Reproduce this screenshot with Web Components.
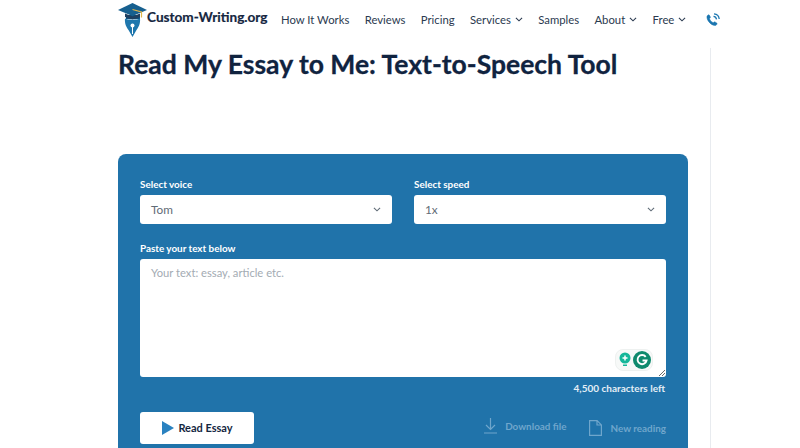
<!DOCTYPE html>
<html>
<head>
<meta charset="utf-8">
<style>
html, body { margin: 0; height: 448px; overflow: hidden; background: #fff; }
body { font-family: Lato, "Open Sans", sans-serif; }
</style>
</head>
<body>
<tts-page>
  <site-header slot="header">
    <nav-item>How It Works</nav-item>
    <nav-item>Reviews</nav-item>
    <nav-item>Pricing</nav-item>
    <nav-item caret>Services</nav-item>
    <nav-item>Samples</nav-item>
    <nav-item caret>About</nav-item>
    <nav-item caret>Free</nav-item>
  </site-header>
  <span slot="title">Read My Essay to Me: Text-to-Speech Tool</span>
  <tts-card>
    <select-field label="Select voice" value="Tom"></select-field>
    <select-field label="Select speed" value="1x"></select-field>
    <text-field label="Paste your text below" placeholder="Your text: essay, article etc." left="4,500 characters left"></text-field>
    <action-bar></action-bar>
  </tts-card>
</tts-page>

<script>
const CARET = `<svg width="8" height="5" viewBox="0 0 9 6" fill="none" stroke="currentColor" stroke-width="1.300"><path d="M.8 1l3.700 3.600L8.200 1"/></svg>`;

class TtsPage extends HTMLElement {
  constructor() {
    super();
    this.attachShadow({ mode: "open" });
    this.shadowRoot.innerHTML = `
    <style>
    :host { display: block; height: 448px; overflow: hidden; }
    .body { display: flex; height: 400px; }
    .main { width: 570px; margin-left: 118px; }
    h1 {
      margin: 0;
      padding-top: 1px;
      height: 105px;
      font: 700 26.5px/30px Lato, sans-serif;
      -webkit-text-stroke: .3px #10233f;
      color: #10233f;
    }
    .rail { margin-left: 22px; width: 1px; background: #e8ebef; }
    </style>
    <slot name="header"></slot>
    <div class="body">
      <div class="main">
        <h1><slot name="title"></slot></h1>
        <slot></slot>
      </div>
      <div class="rail"></div>
    </div>`;
  }
}

class SiteHeader extends HTMLElement {
  constructor() {
    super();
    this.attachShadow({ mode: "open" });
    this.shadowRoot.innerHTML = `
    <style>
    :host { display: flex; align-items: flex-start; height: 48px; padding-left: 118px; box-sizing: border-box; }
    .logo { display: flex; align-items: flex-start; width: 163px; }
    .logo svg { display: block; margin-top: 3px; }
    .name { font: 700 13.6px/18px Lato, sans-serif; -webkit-text-stroke: .2px #15263f; color: #15263f; margin: 8px 0 0 0; white-space: nowrap; }
    nav { display: flex; gap: 15.4px; margin-top: 11px; }
    .phone { margin: 13px 0 0 20px; display: block; }
    </style>
    <div class="logo">
      <svg width="29" height="34" viewBox="0 0 29 34">
        <path d="M8 12h14v4H8z" fill="#0f4f7d"/>
        <path d="M14.500 0L29 7 14.500 13 0 7z" fill="#17608f"/>
        <path d="M7 10.500l7.500 3 7.500-3V14l-7.500 2.500L7 14z" fill="#1f3f5f"/>
        <path d="M14.500 6.500l9 2.500v5.500" fill="none" stroke="#e2b64a" stroke-width="1.200"/>
        <path d="M7 15.500c2.500 1.600 12.500 1.600 15 0 .6 5-1.500 9-3.500 11.500l-4 7-4-7C8.500 24.500 6.400 20.500 7 15.500z" fill="#1f77ad"/>
        <circle cx="14.500" cy="22.500" r="2" fill="#fff"/>
        <path d="M14 24h1v7h-1z" fill="#fff"/>
      </svg>
      <span class="name">Custom-Writing.org</span>
    </div>
    <nav><slot></slot></nav>
    <svg class="phone" width="14" height="14" viewBox="0 0 14 14" fill="none">
      <path d="M1 3.200c.8-1.200 1.600-1.600 2.200-1.200l1.200 2c.2.500-.6 1.200-.9 1.700.6 1.800 2 3.300 3.800 4 .5-.3 1.100-1 1.700-.8l2 1.400c.4.600-.2 1.400-1.300 2.100C6 13.200.2 7.500 1 3.200z" fill="#1b76b0" stroke="#1b76b0" stroke-width=".5"/>
      <path d="M7.500 3.300c1.600.2 2.800 1.400 3 3M8 .8c2.800.2 5 2.400 5.200 5.200" stroke="#1b76b0" stroke-width="1.300"/>
    </svg>`;
  }
}

class NavItem extends HTMLElement {
  constructor() {
    super();
    this.attachShadow({ mode: "open" });
    var caret = this.hasAttribute("caret") ? CARET : "";
    this.shadowRoot.innerHTML = `
    <style>
    :host { display: inline-flex; align-items: center; gap: 4px; font: 400 11.3px/17px Lato, sans-serif; color: #2b3a50; white-space: nowrap; }
    </style>
    <slot></slot>${caret}`;
  }
}

class TtsCard extends HTMLElement {
  constructor() {
    super();
    this.attachShadow({ mode: "open" });
    this.shadowRoot.innerHTML = `
    <style>
    :host {
      display: grid;
      grid-template-columns: 252px 252px;
      column-gap: 22px;
      row-gap: 18px;
      align-content: start;
      box-sizing: border-box;
      width: 570px;
      height: 320px;
      padding: 24px 22px 0;
      background: #2073aa;
      border-radius: 8px 8px 0 0;
    }
    ::slotted(text-field), ::slotted(action-bar) { grid-column: 1 / -1; }
    </style>
    <slot></slot>`;
  }
}

class SelectField extends HTMLElement {
  constructor() {
    super();
    this.attachShadow({ mode: "open" });
    this.shadowRoot.innerHTML = `
    <style>
    :host { display: block; }
    label { display: block; font: 700 9.9px/13px Lato, sans-serif; color: #fff; margin-bottom: 4px; }
    .box {
      display: flex; align-items: center; justify-content: space-between;
      height: 29px; box-sizing: border-box; padding: 0 11px 0 11px;
      background: #fff; border-radius: 3px;
      font: 400 11.8px/14px Lato, sans-serif; color: #5f6b76;
    }
    </style>
    <label>${this.getAttribute("label")}</label>
    <div class="box"><span>${this.getAttribute("value")}</span>${CARET}</div>`;
  }
}

class TextField extends HTMLElement {
  constructor() {
    super();
    this.attachShadow({ mode: "open" });
    this.shadowRoot.innerHTML = `
    <style>
    :host { display: block; }
    label { display: block; font: 700 9.9px/13px Lato, sans-serif; color: #fff; margin-bottom: 4px; }
    .box {
      position: relative; height: 118px; box-sizing: border-box; padding: 7px 11px;
      background: #fff; border-radius: 3px;
      font: 400 11.2px/14px Lato, sans-serif; color: #a3abb3;
    }
    .gram {
      position: absolute; left: 475px; top: 90px;
      display: flex; align-items: center; gap: 1px;
      width: 38px; height: 22px; box-sizing: border-box; padding: 0 1px 0 2px;
      background: #f7f9f8; border: 1px solid #eef1f0; border-radius: 8px;
    }
    .grip { position: absolute; right: 1px; bottom: 1px; display: block; }
    .left { margin-top: 5px; margin-right: 1px; text-align: right; font: 700 10px/13px Lato, sans-serif; color: #e3eef6; }
    </style>
    <label>${this.getAttribute("label")}</label>
    <div class="box">${this.getAttribute("placeholder")}
      <div class="gram">
        <svg width="14" height="16" viewBox="0 0 14 16">
          <circle cx="7" cy="6" r="5.500" fill="#15b79a"/>
          <path d="M5 12.500h4v1.500H5z" fill="#15b79a"/>
          <path d="M7 3.500v5M4.500 6h5" stroke="#fff" stroke-width="1.500"/>
        </svg>
        <svg width="18" height="18" viewBox="0 0 17 17">
          <circle cx="8.500" cy="8.500" r="8.500" fill="#0f8a6d"/>
          <path d="M12 5.500A4.300 4.300 0 1 0 12.800 9H9" fill="none" stroke="#fff" stroke-width="1.800"/>
        </svg>
      </div>
      <svg class="grip" width="7" height="7" viewBox="0 0 7 7" stroke="#444" stroke-width=".8"><path d="M1 7l6-6M4 7l3-3"/></svg>
    </div>
    <div class="left">${this.getAttribute("left")}</div>`;
  }
}

class ActionBar extends HTMLElement {
  constructor() {
    super();
    this.attachShadow({ mode: "open" });
    this.shadowRoot.innerHTML = `
    <style>
    :host { display: flex; align-items: center; margin-top: -1px; }
    button {
      display: flex; align-items: center; justify-content: center; gap: 4px;
      width: 114px; height: 32px; padding: 0 0 0 1px; border: 0; border-radius: 3px;
      background: #fff; color: #14263f; font: 700 11px/14px Lato, sans-serif;
    }
    .spacer { flex: 1; }
    .act { display: flex; align-items: center; gap: 8px; font: 700 9.9px/12px Lato, sans-serif; color: #6fa6cc; }
    .dl { margin-right: 23px; margin-top: -4px; }
    svg { display: block; }
    </style>
    <button>
      <svg width="12" height="14" viewBox="0 0 12 14"><path d="M0 0l12 7-12 7z" fill="#2a82c0"/></svg>
      Read Essay
    </button>
    <div class="spacer"></div>
    <div class="act dl">
      <svg width="13" height="16" viewBox="0 0 13 16" fill="none" stroke="#6fa6cc" stroke-width="1.200"><path d="M6.500 0v11M2 7l4.500 4.500L11 7M0 15h13"/></svg>
      Download file
    </div>
    <div class="act">
      <svg width="13" height="16" viewBox="0 0 13 16" fill="none" stroke="#6fa6cc" stroke-width="1.200"><path d="M.6.600h7.500l4.300 4.300v10.500H.6zM8 .6v4.400h4.400"/></svg>
      New reading
    </div>`;
  }
}

customElements.define("tts-page", TtsPage);
customElements.define("site-header", SiteHeader);
customElements.define("nav-item", NavItem);
customElements.define("tts-card", TtsCard);
customElements.define("select-field", SelectField);
customElements.define("text-field", TextField);
customElements.define("action-bar", ActionBar);
</script>
</body>
</html>
